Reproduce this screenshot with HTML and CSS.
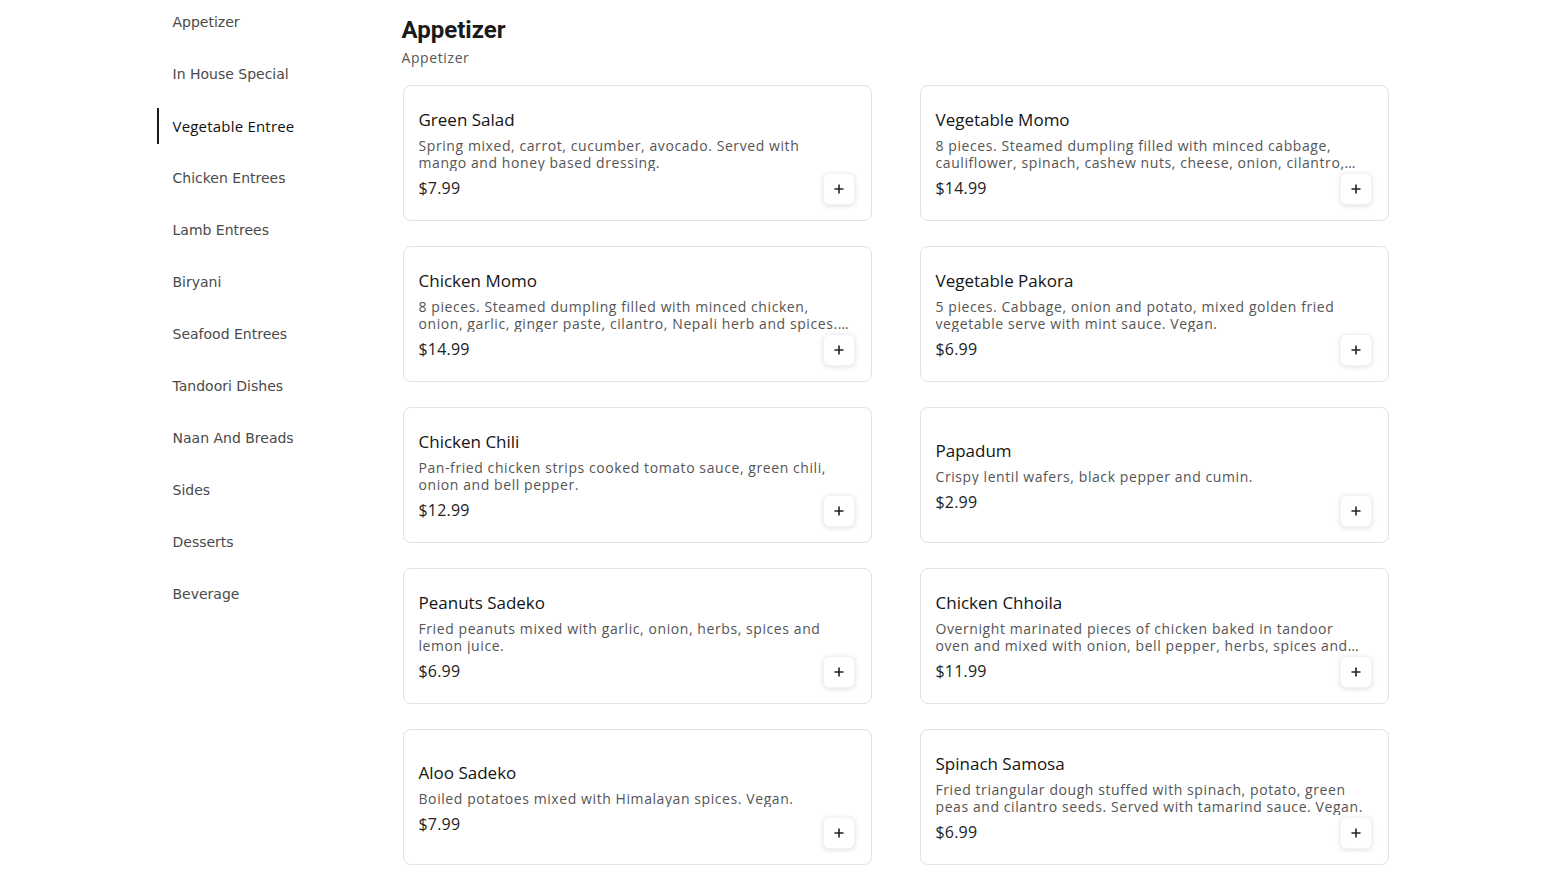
FILE: index.html
```html
<!DOCTYPE html>
<html lang="en">
<head>
<meta charset="utf-8">
<title>Menu</title>
<link rel="stylesheet" href="styles.css">
</head>
<body>
<div class="page">
  <nav class="sidebar">
    <a class="nav-item">Appetizer</a>
    <a class="nav-item">In House Special</a>
    <a class="nav-item active">Vegetable Entree</a>
    <a class="nav-item">Chicken Entrees</a>
    <a class="nav-item">Lamb Entrees</a>
    <a class="nav-item">Biryani</a>
    <a class="nav-item">Seafood Entrees</a>
    <a class="nav-item">Tandoori Dishes</a>
    <a class="nav-item">Naan And Breads</a>
    <a class="nav-item">Sides</a>
    <a class="nav-item">Desserts</a>
    <a class="nav-item">Beverage</a>
  </nav>
  <main class="main">
    <h1 class="section-title">Appetizer</h1>
    <div class="section-sub">Appetizer</div>
    <div class="grid">
      <div class="card">
        <div class="info">
          <h3 class="name">Green Salad</h3>
          <p class="desc">Spring mixed, carrot, cucumber, avocado. Served with mango and honey based dressing.</p>
          <div class="price">$7.99</div>
        </div>
        <button class="add"><svg viewBox="0 0 12 12" width="12" height="12"><path d="M6 1.5v9M1.5 6h9" stroke="#222" stroke-width="1.6" fill="none"/></svg></button>
      </div>
      <div class="card">
        <div class="info">
          <h3 class="name">Vegetable Momo</h3>
          <p class="desc">8 pieces. Steamed dumpling filled with minced cabbage, cauliflower, spinach, cashew nuts, cheese, onion, cilantro, Nepali herb and spices. Served with tomato sauce.</p>
          <div class="price">$14.99</div>
        </div>
        <button class="add"><svg viewBox="0 0 12 12" width="12" height="12"><path d="M6 1.5v9M1.5 6h9" stroke="#222" stroke-width="1.6" fill="none"/></svg></button>
      </div>
      <div class="card">
        <div class="info">
          <h3 class="name">Chicken Momo</h3>
          <p class="desc">8 pieces. Steamed dumpling filled with minced chicken, onion, garlic, ginger paste, cilantro, Nepali herb and spices. Served with tomato sauce.</p>
          <div class="price">$14.99</div>
        </div>
        <button class="add"><svg viewBox="0 0 12 12" width="12" height="12"><path d="M6 1.5v9M1.5 6h9" stroke="#222" stroke-width="1.6" fill="none"/></svg></button>
      </div>
      <div class="card">
        <div class="info">
          <h3 class="name">Vegetable Pakora</h3>
          <p class="desc">5 pieces. Cabbage, onion and potato, mixed golden fried vegetable serve with mint sauce. Vegan.</p>
          <div class="price">$6.99</div>
        </div>
        <button class="add"><svg viewBox="0 0 12 12" width="12" height="12"><path d="M6 1.5v9M1.5 6h9" stroke="#222" stroke-width="1.6" fill="none"/></svg></button>
      </div>
      <div class="card">
        <div class="info">
          <h3 class="name">Chicken Chili</h3>
          <p class="desc">Pan-fried chicken strips cooked tomato sauce, green chili, onion and bell pepper.</p>
          <div class="price">$12.99</div>
        </div>
        <button class="add"><svg viewBox="0 0 12 12" width="12" height="12"><path d="M6 1.5v9M1.5 6h9" stroke="#222" stroke-width="1.6" fill="none"/></svg></button>
      </div>
      <div class="card">
        <div class="info">
          <h3 class="name">Papadum</h3>
          <p class="desc">Crispy lentil wafers, black pepper and cumin.</p>
          <div class="price">$2.99</div>
        </div>
        <button class="add"><svg viewBox="0 0 12 12" width="12" height="12"><path d="M6 1.5v9M1.5 6h9" stroke="#222" stroke-width="1.6" fill="none"/></svg></button>
      </div>
      <div class="card">
        <div class="info">
          <h3 class="name">Peanuts Sadeko</h3>
          <p class="desc">Fried peanuts mixed with garlic, onion, herbs, spices and lemon juice.</p>
          <div class="price">$6.99</div>
        </div>
        <button class="add"><svg viewBox="0 0 12 12" width="12" height="12"><path d="M6 1.5v9M1.5 6h9" stroke="#222" stroke-width="1.6" fill="none"/></svg></button>
      </div>
      <div class="card">
        <div class="info">
          <h3 class="name">Chicken Chhoila</h3>
          <p class="desc">Overnight marinated pieces of chicken baked in tandoor oven and mixed with onion, bell pepper, herbs, spices and mustard oil.</p>
          <div class="price">$11.99</div>
        </div>
        <button class="add"><svg viewBox="0 0 12 12" width="12" height="12"><path d="M6 1.5v9M1.5 6h9" stroke="#222" stroke-width="1.6" fill="none"/></svg></button>
      </div>
      <div class="card">
        <div class="info">
          <h3 class="name">Aloo Sadeko</h3>
          <p class="desc">Boiled potatoes mixed with Himalayan spices. Vegan.</p>
          <div class="price">$7.99</div>
        </div>
        <button class="add"><svg viewBox="0 0 12 12" width="12" height="12"><path d="M6 1.5v9M1.5 6h9" stroke="#222" stroke-width="1.6" fill="none"/></svg></button>
      </div>
      <div class="card">
        <div class="info">
          <h3 class="name">Spinach Samosa</h3>
          <p class="desc">Fried triangular dough stuffed with spinach, potato, green peas and cilantro seeds. Served with tamarind sauce. Vegan.</p>
          <div class="price">$6.99</div>
        </div>
        <button class="add"><svg viewBox="0 0 12 12" width="12" height="12"><path d="M6 1.5v9M1.5 6h9" stroke="#222" stroke-width="1.6" fill="none"/></svg></button>
      </div>
    </div>
  </main>
</div>
</body>
</html>
```

FILE: styles.css
```css
* { box-sizing: border-box; }
html, body { margin: 0; padding: 0; background: #fff; }
body { font-family: "Open Sans", "Noto Sans", sans-serif; color: #1a1a1a; }

.page {
  width: 1232px;
  margin: 0 auto;
  display: grid;
  grid-template-columns: 246px 1fr;
}

.sidebar {
  display: flex;
  flex-direction: column;
  gap: 16px;
  padding-top: 4px;
}
.nav-item {
  display: flex;
  align-items: center;
  height: 36px;
  padding-left: 14px;
  border-left: 2px solid transparent;
  font-family: "DejaVu Sans", sans-serif;
  font-size: 14px;
  color: #4a4a4a;
  cursor: pointer;
}
.nav-item.active {
  border-left-color: #1a1a1a;
  font-family: "Open Sans", sans-serif;
  font-weight: 500;
  font-size: 15px;
  letter-spacing: 0.2px;
  color: #111;
}

.main { padding-top: 14px; }
.section-title {
  margin: 0 0 0 -1px;
  font-family: Roboto, sans-serif;
  font-weight: 700;
  font-size: 24px;
  line-height: 32px;
  color: #1a1a1a;
}
.section-sub {
  margin-top: 2px;
  margin-left: -1px;
  font-size: 14px;
  line-height: 20px;
  letter-spacing: 0.6px;
  color: #555;
}

.grid {
  margin-top: 17px;
  display: grid;
  grid-template-columns: 1fr 1fr;
  column-gap: 48px;
  row-gap: 25px;
}

.card {
  position: relative;
  height: 136px;
  border: 1px solid #e2e2e2;
  border-radius: 8px;
  padding: 1px 15px 0;
  display: flex;
  align-items: center;
  background: #fff;
}
.info { width: 100%; }
.name {
  margin: 0;
  font-size: 17px;
  font-weight: 500;
  line-height: 22px;
  color: #141414;
}
.desc {
  margin: 6px 0 0;
  padding-right: 6px;
  font-size: 14px;
  line-height: 17px;
  letter-spacing: 0.58px;
  color: #555;
  display: -webkit-box;
  -webkit-line-clamp: 2;
  -webkit-box-orient: vertical;
  overflow: hidden;
}
.price {
  margin-top: 7px;
  font-size: 16px;
  line-height: 20px;
  letter-spacing: 0.2px;
  color: #222;
}
.add {
  position: absolute;
  right: 16px;
  bottom: 15px;
  width: 32px;
  height: 32px;
  padding: 0;
  border: 1px solid #f2f2f2;
  border-radius: 6px;
  background: #fff;
  box-shadow: 0 1px 5px rgba(0,0,0,0.13);
  display: flex;
  align-items: center;
  justify-content: center;
  cursor: pointer;
}
```
